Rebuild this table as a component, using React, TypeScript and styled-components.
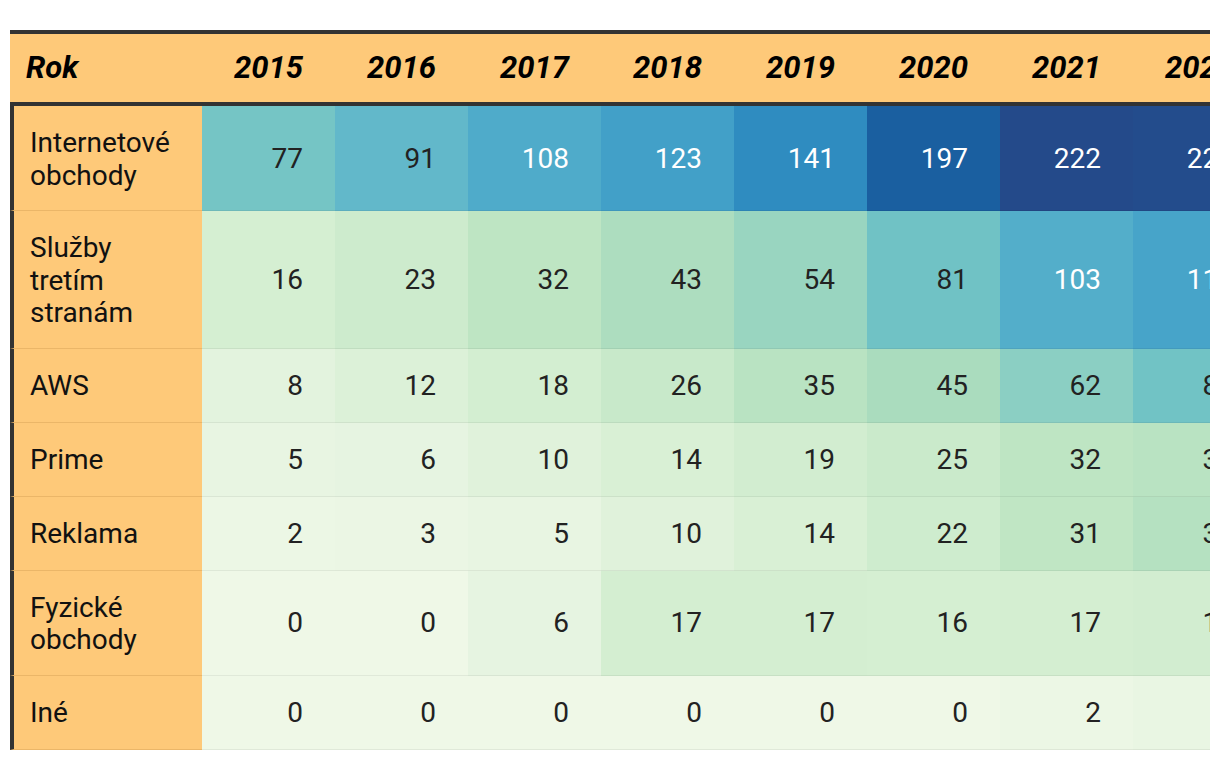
import React from 'react'
import styled, { createGlobalStyle } from 'styled-components'

const years = [2015, 2016, 2017, 2018, 2019, 2020, 2021, 2022]

const rows: { label: string; values: number[] }[] = [
	{ label: 'Internetové obchody', values: [77, 91, 108, 123, 141, 197, 222, 220] },
	{ label: 'Služby tretím stranám', values: [16, 23, 32, 43, 54, 81, 103, 117] },
	{ label: 'AWS', values: [8, 12, 18, 26, 35, 45, 62, 80] },
	{ label: 'Prime', values: [5, 6, 10, 14, 19, 25, 32, 35] },
	{ label: 'Reklama', values: [2, 3, 5, 10, 14, 22, 31, 38] },
	{ label: 'Fyzické obchody', values: [0, 0, 6, 17, 17, 16, 17, 19] },
	{ label: 'Iné', values: [0, 0, 0, 0, 0, 0, 2, 4] },
]

// hodnota -> farba (ručne odčítané zastávky škály)
const stops: [number, string][] = [
	[0, '#eff8e7'],
	[5, '#e8f5e2'],
	[10, '#e0f2db'],
	[16, '#d5efd2'],
	[23, '#cdebcd'],
	[32, '#bee5c3'],
	[45, '#aadcbe'],
	[54, '#99d5c0'],
	[62, '#8bcfc3'],
	[80, '#71c3c5'],
	[91, '#62b8ca'],
	[103, '#53aeca'],
	[123, '#42a0c8'],
	[141, '#2f8cc0'],
	[197, '#1a5fa0'],
	[222, '#244a8a'],
]

const hex = (c: string) => [1, 3, 5].map(i => parseInt(c.slice(i, i + 2), 16))

const colorFor = (v: number) => {
	for (let i = 1; i < stops.length; i++) {
		const [v1, c1] = stops[i]
		if (v <= v1) {
			const [v0, c0] = stops[i - 1]
			const t = (v - v0) / (v1 - v0)
			const a = hex(c0)
			const b = hex(c1)
			const mix = a.map((x, k) => Math.round(x + (b[k] - x) * t))
			return `rgb(${mix.join(',')})`
		}
	}
	return stops[stops.length - 1][1]
}

const GlobalStyle = createGlobalStyle`
	html, body {
		margin: 0;
		padding: 0;
		background: #fff;
	}
	body {
		font-family: Roboto, 'Liberation Sans', sans-serif;
	}
`

const Frame = styled.div`
	margin: 10px;
	padding-top: 20px;
	width: 1200px;
	height: 720px;
	overflow: hidden;
`

const Table = styled.table`
	border-collapse: separate;
	border-spacing: 0;
	table-layout: fixed;
	width: 1256px;
`

const HeadRow = styled.tr`
	background: #fec979;
`

const HeadCell = styled.th<{ $first?: boolean }>`
	border-top: 4px solid #333;
	border-bottom: 4px solid #333;
	padding: 16px 32px 16px 16px;
	font-size: 31px;
	line-height: 36px;
	font-weight: 700;
	font-style: italic;
	color: #000;
	text-align: ${p => (p.$first ? 'left' : 'right')};
	white-space: nowrap;
`

const LabelCell = styled.th`
	background: #fec979;
	border-left: 4px solid #333;
	border-bottom: 1px solid #ebb668;
	padding: 21px 16px 18px 16px;
	font-size: 28px;
	line-height: 32.5px;
	font-weight: 400;
	color: #111;
	text-align: left;
	vertical-align: middle;
`

const ValueCell = styled.td<{ $bg: string; $dark: boolean }>`
	background: ${p => p.$bg};
	border-bottom: 1px solid rgba(0, 0, 0, 0.06);
	padding: 20px 32px 19px 16px;
	font-size: 28px;
	line-height: 34px;
	color: ${p => (p.$dark ? '#fff' : '#222')};
	text-align: right;
	vertical-align: middle;
	white-space: nowrap;
`

export default function App() {
	return (
		<>
			<GlobalStyle />
			<Frame>
				<Table>
					<colgroup>
						<col style={{ width: 192 }} />
						{years.map(y => (
							<col key={y} style={{ width: 133 }} />
						))}
					</colgroup>
					<thead>
						<HeadRow>
							<HeadCell $first>Rok</HeadCell>
							{years.map(y => (
								<HeadCell key={y}>{y}</HeadCell>
							))}
						</HeadRow>
					</thead>
					<tbody>
						{rows.map(r => (
							<tr key={r.label}>
								<LabelCell>{r.label}</LabelCell>
								{r.values.map((v, i) => (
									<ValueCell key={i} $bg={colorFor(v)} $dark={v >= 100}>
										{v}
									</ValueCell>
								))}
							</tr>
						))}
					</tbody>
				</Table>
			</Frame>
		</>
	)
}
